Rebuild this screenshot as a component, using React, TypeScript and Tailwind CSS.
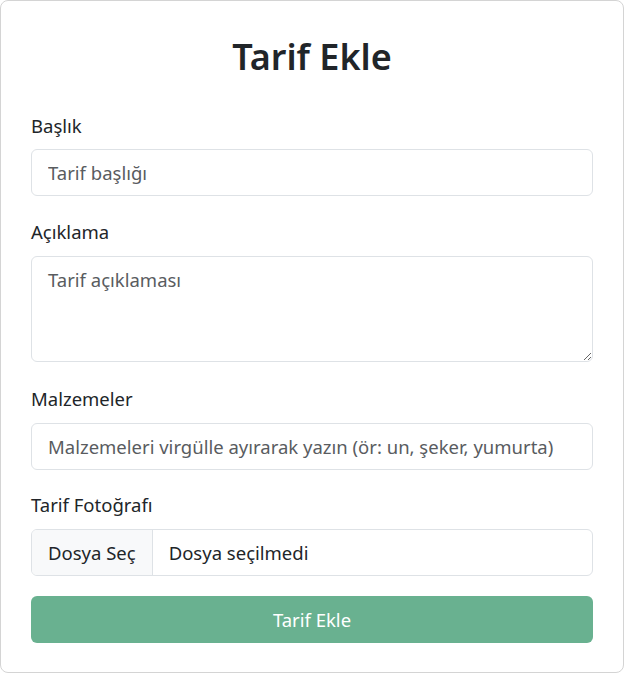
import React from "react";

export default function App() {
  const font = { fontFamily: '"Noto Sans", "Open Sans", sans-serif' };
  return (
    <div className="w-[625px] h-[673px] bg-white" style={font}>
      <div className="h-[673px] w-[624px] border border-[#d4d4d4] rounded-[8px] bg-white px-[30px] pt-[30px] text-[#212529]">
        <h1 className="text-center text-[36px] leading-[52px] font-semibold text-[#212529] mb-[30px]">
          Tarif Ekle
        </h1>
        <div className="flex flex-col">
          <label className="text-[18.5px] leading-[26px] mb-[10px]">Başlık</label>
          <input
            className="h-[47px] w-full rounded-[6px] border border-[#dee2e6] px-4 text-[18.5px] placeholder:text-[#595c5f] outline-none"
            placeholder="Tarif başlığı"
          />
          <label className="text-[18.5px] leading-[26px] mt-[23px] mb-[11px]">Açıklama</label>
          <textarea
            className="h-[106px] w-full rounded-[6px] border border-[#dee2e6] px-4 py-[10px] text-[18.5px] leading-[26px] placeholder:text-[#595c5f] outline-none"
            placeholder="Tarif açıklaması"
          />
          <label className="text-[18.5px] leading-[26px] mt-[24px] mb-[11px]">Malzemeler</label>
          <input
            className="h-[47px] w-full rounded-[6px] border border-[#dee2e6] px-4 text-[18.5px] placeholder:text-[#595c5f] outline-none"
            placeholder="Malzemeleri virgülle ayırarak yazın (ör: un, şeker, yumurta)"
          />
          <label className="text-[18.5px] leading-[26px] mt-[22px] mb-[11px]">Tarif Fotoğrafı</label>
          <div className="h-[47px] w-full rounded-[6px] border border-[#dee2e6] flex items-stretch overflow-hidden text-[18.5px]">
            <div className="bg-[#f8f9fa] border-r border-[#dee2e6] px-4 flex items-center">Dosya Seç</div>
            <div className="px-4 flex items-center">Dosya seçilmedi</div>
          </div>
          <button className="mt-[20px] h-[47px] w-full rounded-[6px] bg-[#69b190] text-white text-[18.5px]">
            Tarif Ekle
          </button>
        </div>
      </div>
    </div>
  );
}
